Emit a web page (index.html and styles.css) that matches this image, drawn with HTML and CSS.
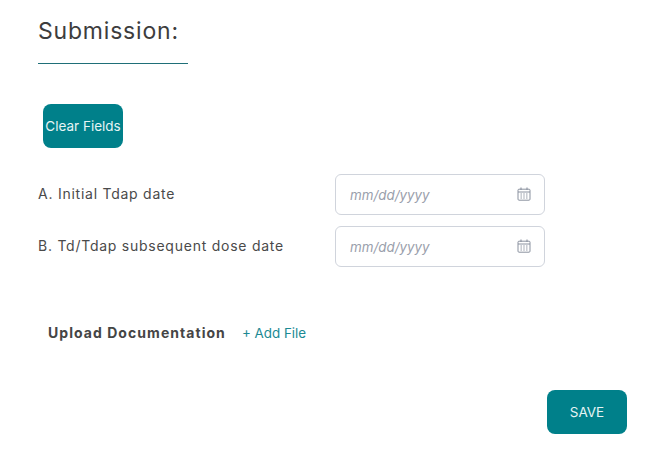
FILE: index.html
```html
<!DOCTYPE html>
<html lang="en">
<head>
  <meta charset="UTF-8">
  <title>Submission</title>
  <link rel="stylesheet" href="styles.css">
</head>
<body>
  <div class="container">
    <h2 class="title">Submission:</h2>
    <button class="btn btn-clear">Clear Fields</button>

    <div class="date-row">
      <label for="tdap">A. Initial Tdap date</label>
      <div class="date-field">
        <input type="text" id="tdap" placeholder="mm/dd/yyyy">
        <svg class="cal" viewBox="0 0 14 14" width="14" height="14">
          <path d="M1 3.2a1 1 0 0 1 1-1h10a1 1 0 0 1 1 1v9a1 1 0 0 1-1 1H2a1 1 0 0 1-1-1z" fill="none" stroke="#8a919f" stroke-width="1"/>
          <path d="M1 5h12" stroke="#8a919f" stroke-width="1"/>
          <path d="M4 .6v2.4M10 .6v2.4" stroke="#8a919f" stroke-width="1.1"/>
          <path d="M3.5 7h1.4M6.3 7h1.4M9.1 7h1.4M3.5 9h1.4M6.3 9h1.4M9.1 9h1.4M3.5 11h1.4M6.3 11h1.4M9.1 11h1.4" stroke="#8a919f" stroke-width="1"/>
        </svg>
      </div>
    </div>

    <div class="date-row">
      <label for="td-tdap">B. Td/Tdap subsequent dose date</label>
      <div class="date-field">
        <input type="text" id="td-tdap" placeholder="mm/dd/yyyy">
        <svg class="cal" viewBox="0 0 14 14" width="14" height="14">
          <path d="M1 3.2a1 1 0 0 1 1-1h10a1 1 0 0 1 1 1v9a1 1 0 0 1-1 1H2a1 1 0 0 1-1-1z" fill="none" stroke="#8a919f" stroke-width="1"/>
          <path d="M1 5h12" stroke="#8a919f" stroke-width="1"/>
          <path d="M4 .6v2.4M10 .6v2.4" stroke="#8a919f" stroke-width="1.1"/>
          <path d="M3.5 7h1.4M6.3 7h1.4M9.1 7h1.4M3.5 9h1.4M6.3 9h1.4M9.1 9h1.4M3.5 11h1.4M6.3 11h1.4M9.1 11h1.4" stroke="#8a919f" stroke-width="1"/>
        </svg>
      </div>
    </div>

    <div class="upload-row">
      <span class="upload-label">Upload Documentation</span>
      <a class="add-file">+ Add File</a>
    </div>

    <div class="actions">
      <button class="btn btn-save">SAVE</button>
    </div>
  </div>
</body>
</html>
```

FILE: styles.css
```css
body {
  font-family: Inter, "Liberation Sans", sans-serif;
  margin: 0;
  padding: 0;
  background: white;
  color: #3d3d3d;
}
.container {
  width: 589px;
  padding: 17px 0 0 38px;
}
.title {
  width: 150px;
  height: 46px;
  margin: 0 0 40px;
  border-bottom: 1px solid #1f6f78;
  font-size: 23px;
  line-height: 28px;
  font-weight: 400;
  letter-spacing: 0.8px;
}
.btn {
  display: block;
  width: 80px;
  height: 44px;
  padding: 0;
  border: none;
  border-radius: 8px;
  background-color: #00808a;
  color: #e6f4f5;
  font-family: inherit;
  font-size: 13.5px;
  cursor: pointer;
}
.btn-clear {
  margin: 0 0 26px 5px;
  line-height: 43px;
}
.date-row {
  display: flex;
  align-items: center;
  margin-bottom: 11px;
}
.date-row label {
  width: 297px;
  margin-top: -2px;
  font-size: 14px;
  letter-spacing: 0.75px;
  color: #4a4a4a;
}
.date-field {
  display: flex;
  align-items: center;
  width: 210px;
  height: 41px;
  padding: 0 13px 0 14px;
  box-sizing: border-box;
  border: 1px solid #d0d4dc;
  border-radius: 6px;
}
.date-field input {
  flex: 1;
  min-width: 0;
  padding: 0;
  border: none;
  outline: none;
  font-family: inherit;
  font-size: 13.4px;
  font-style: italic;
}
.date-field input::placeholder {
  color: #9aa0ac;
  opacity: 1;
}
.cal {
  margin-bottom: 2px;
}
.upload-row {
  display: flex;
  align-items: center;
  margin: 57px 0 0 10px;
}
.upload-label {
  font-size: 14px;
  font-weight: 700;
  letter-spacing: 1.05px;
  margin-right: 16px;
  color: #454545;
}
.add-file {
  font-size: 13.4px;
  color: #1b8a94;
}
.actions {
  display: flex;
  justify-content: flex-end;
  margin-top: 49px;
}
```
